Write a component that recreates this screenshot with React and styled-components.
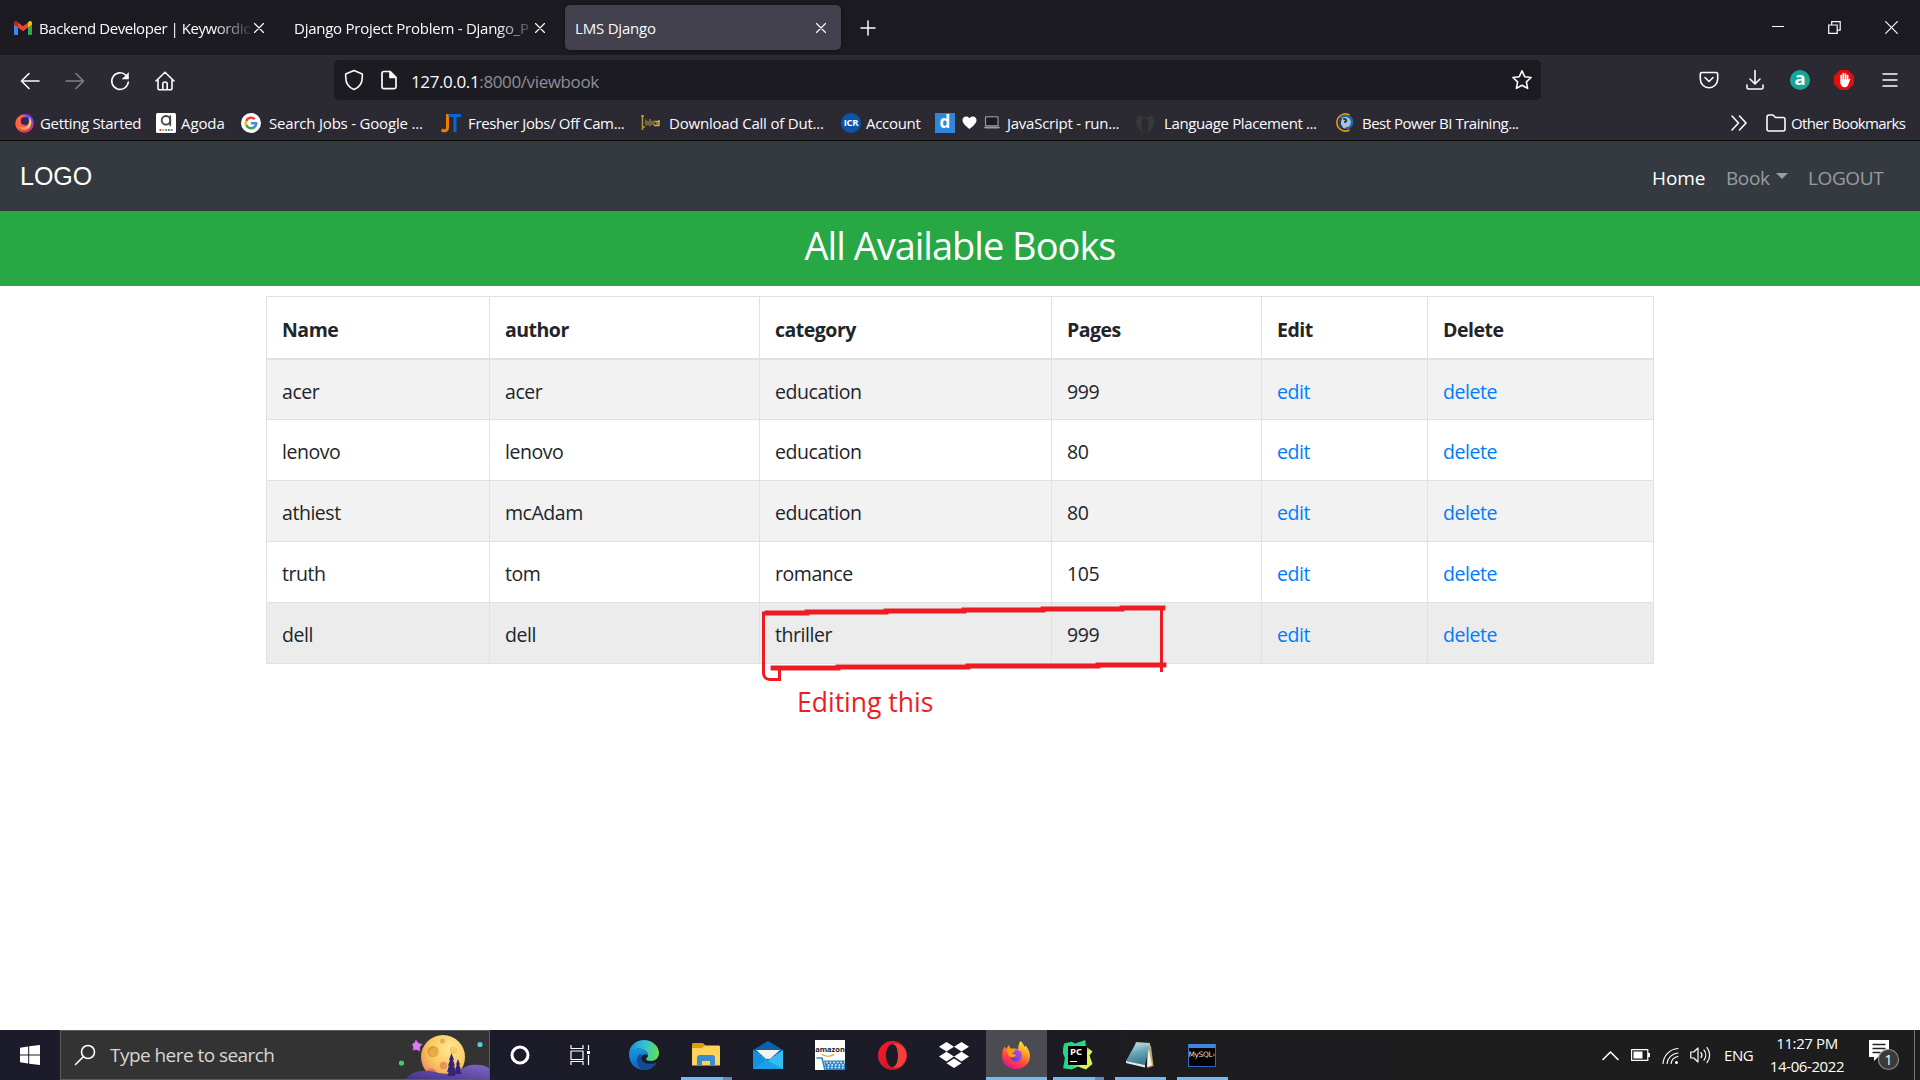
import React from 'react';
import styled, { createGlobalStyle, css } from 'styled-components';

const ui = '"Open Sans", "Noto Sans", sans-serif';

const Global = createGlobalStyle`
  * { box-sizing: border-box; }
  html, body { margin: 0; padding: 0; background: #fff; overflow: hidden; }
  body { font-family: ${ui}; font-size: 20px; line-height: 1.5; color: #212529; }
`;

const Screen = styled.div`
  width: 1920px;
  height: 1080px;
  display: flex;
  flex-direction: column;
`;

/* ---------- browser chrome ---------- */
const TabStrip = styled.div`
  height: 55px;
  flex: none;
  display: flex;
  align-items: center;
  background: #1c1b22;
  color: #fbfbfe;
`;
const Tab = styled.div`
  width: ${(p) => p.$width}px;
  height: 45px;
  flex: none;
  display: flex;
  align-items: center;
  padding: 0 ${(p) => p.$right}px 0 ${(p) => p.$left}px;
  border-radius: 5px;
  ${(p) => p.$active && css`
    background: #42414d;
    box-shadow: 0 0 4px rgba(0, 0, 0, 0.5);
  `}
`;
const TabTitle = styled.span`
  flex: 1;
  min-width: 0;
  white-space: nowrap;
  font-size: 15px;
  padding-top: 2px;
  letter-spacing: ${(p) => p.$track || 0}px;
  margin-left: ${(p) => (p.$icon ? 7 : 0)}px;
  ${(p) => p.$fade && css`
    mask-image: linear-gradient(to right, #000 calc(100% - 36px), rgba(0, 0, 0, 0.1));
  `}
`;
const Glyph = styled.svg`
  width: ${(p) => p.$s || 20}px;
  height: ${(p) => p.$h || p.$s || 20}px;
  flex: none;
  display: block;
  fill: none;
  stroke: currentColor;
  stroke-width: ${(p) => p.$w || 1.6};
  stroke-linecap: round;
  stroke-linejoin: round;
  margin-left: ${(p) => p.$ml || 0}px;
`;
const WindowControls = styled.div`
  margin-left: auto;
  display: flex;
  align-items: center;
  gap: 44px;
  padding-right: 22px;
`;
const Toolbar = styled.div`
  height: 50px;
  flex: none;
  display: flex;
  align-items: center;
  background: #2b2a33;
  color: #fbfbfe;
  padding: 0 19px;
`;
const NavButtons = styled.div`
  width: 315px;
  display: flex;
  gap: 23px;
  padding-top: 2px;
`;
const Faded = styled.span`
  display: block;
  opacity: 0.4;
`;
const UrlBar = styled.div`
  width: 1207px;
  height: 40px;
  display: flex;
  align-items: center;
  background: #1c1b22;
  border-radius: 5px;
  padding: 0 8px 0 9px;
`;
const Url = styled.span`
  flex: 1;
  margin-left: 12px;
  font-size: 17px;
  letter-spacing: -0.38px;
  padding-top: 3px;
  color: #8f8f98;
  b { font-weight: 400; color: #fbfbfe; }
`;
const ToolButtons = styled.div`
  margin-left: auto;
  display: flex;
  align-items: center;
  gap: 24px;
`;
const Bookmarks = styled.div`
  height: 36px;
  flex: none;
  display: flex;
  align-items: center;
  background: #2b2a33;
  border-bottom: 1px solid #0c0c0d;
  color: #fbfbfe;
  padding: 0 15px;
`;
const Bookmark = styled.div`
  width: ${(p) => p.$width}px;
  flex: none;
  display: flex;
  align-items: center;
  gap: ${(p) => p.$gap}px;
  white-space: nowrap;
  font-size: 15px;
  line-height: 20px;
  letter-spacing: ${(p) => p.$track}px;
`;
const BookmarkEnd = styled.div`
  margin-left: auto;
  display: flex;
  align-items: center;
`;
const BookmarkLabel = styled.span`
  margin-left: 5px;
`;

/* ---------- site ---------- */
const Navbar = styled.nav`
  height: 70px;
  flex: none;
  display: flex;
  align-items: center;
  justify-content: space-between;
  background: #343a40;
  padding: 0 35px 0 20px;
`;
const Brand = styled.span`
  font: 25px/38px "Liberation Sans", Arial, sans-serif;
  color: #fff;
`;
const NavLinks = styled.div`
  display: flex;
  padding-top: 4px;
`;
const NavLink = styled.span`
  width: ${(p) => p.$width}px;
  display: flex;
  align-items: center;
  font-size: 19px;
  letter-spacing: ${(p) => p.$track || 0}px;
  color: ${(p) => (p.$active ? '#fff' : 'rgba(255,255,255,.5)')};
`;
const Caret = styled.i`
  margin: -4px 0 0 6px;
  border: 6px solid transparent;
  border-top-color: currentColor;
  border-bottom: 0;
`;
const Banner = styled.h1`
  height: 75px;
  flex: none;
  margin: 0;
  padding-top: 10px;
  background: #28a745;
  color: #fff;
  text-align: center;
  font-size: 38px;
  font-weight: 400;
  line-height: 48px;
  letter-spacing: -1px;
`;
const Content = styled.main`
  flex: 1;
  position: relative;
  padding: 10px 0 0 266px;
`;
const Table = styled.table`
  width: 1388px;
  table-layout: fixed;
  border-collapse: collapse;
  font-size: 19.500px;
`;
const Col = styled.col`
  width: ${(p) => p.$width}px;
`;
const Cell = styled.td`
  height: 61px;
  padding: 4px 15px 0;
  border: 1px solid #dee2e6;
  text-align: left;
  vertical-align: middle;
  letter-spacing: -0.45px;
  color: ${(p) => (p.$link ? '#007bff' : '#212529')};
`;
const HeadCell = styled(Cell)`
  height: 62px;
  font-weight: 700;
  border-bottom-width: 2px;
  letter-spacing: -0.5px;
`;
const Row = styled.tr`
  background: ${(p) => p.$bg};
`;
const Marker = styled.svg`
  position: absolute;
  left: 756px;
  top: 315px;
  width: 420px;
  height: 90px;
  fill: none;
  stroke: #ed1c24;
`;
const Note = styled.span`
  position: absolute;
  left: 797px;
  top: 396px;
  font-size: 26.500px;
  line-height: 40px;
  color: #ed1c24;
`;

/* ---------- taskbar ---------- */
const Taskbar = styled.div`
  height: 50px;
  flex: none;
  display: flex;
  align-items: stretch;
  background: linear-gradient(to right, #1b1b29 0, #1c1b28 50%, #1d1d1f 62%, #1d1d1d 100%);
  color: #fff;
`;
const Slot = styled.div`
  width: ${(p) => p.$width}px;
  flex: none;
  display: flex;
  align-items: center;
  justify-content: center;
  background: ${(p) => (p.$focus ? '#4b4c52' : 'transparent')};
  border-bottom: 3px solid transparent;
  border-top: 3px solid transparent;
  padding-right: ${(p) => p.$nudge || 0}px;
`;
const RunningSlot = styled(Slot)`
  border-image: linear-gradient(to right, #76b9ed ${(p) => p.$split || 100}%, #5b8db8 ${(p) => p.$split || 100}%) 3;
  border-top: 0;
  padding-top: 3px;
  padding-right: 2px;
  margin: 0 ${(p) => p.$gap || 0}px;
`;
const SearchBox = styled.div`
  width: 430px;
  flex: none;
  display: flex;
  align-items: center;
  background: #333;
  border: 1px solid #5c5c5c;
  padding-left: 13px;
`;
const SearchText = styled.span`
  flex: 1;
  margin-left: 14px;
  font-size: 19px;
  letter-spacing: -0.55px;
  color: #d6d6d6;
`;
const Tray = styled.div`
  margin-left: auto;
  display: flex;
  align-items: center;
  font-size: 15px;
  line-height: 23px;
`;
const Lang = styled.span`
  width: 45px;
  letter-spacing: -0.4px;
  margin-left: 12px;
`;
const Clock = styled.div`
  width: 76px;
  text-align: center;
  white-space: nowrap;
  letter-spacing: -0.4px;
`;
const DesktopEdge = styled.div`
  width: 6px;
  height: 50px;
  border-left: 1px solid #777;
  margin-left: 14px;
`;

/* ---------- icons ---------- */
const Close = ({ s = 10, w = 1.2, ml }) => (
  <Glyph $s={s} $w={w} $ml={ml} viewBox="0 0 10 10"><path d="M.5.5l9 9M9.5.5l-9 9" /></Glyph>
);
const Gmail = () => (
  <Glyph $s={18} $h={14} viewBox="0 0 18 14" stroke="none">
    <g stroke="none">
      <path fill="#4285f4" d="M0 3v9.700C0 13.500.6 14 1.300 14H4V5.500z" />
      <path fill="#34a853" d="M14 14h2.700c.7 0 1.300-.5 1.300-1.300V3l-4 2.500z" />
      <path fill="#fbbc04" d="M14 1.500v5L18 3.500V2c0-2-2-2.600-3.300-1.500z" />
      <path fill="#ea4335" d="M4 6.500v-5l5 3.700 5-3.700v5l-5 3.800z" />
      <path fill="#c5221f" d="M0 2v1.500l4 3v-5L3.300.5C2-.6 0 0 0 2z" />
    </g>
  </Glyph>
);
const FirefoxLogo = ({ s = 28 }) => (
  <Glyph $s={s} viewBox="0 0 28 28">
    <defs>
      <linearGradient id="fx" x1=".8" y1="0" x2=".3" y2="1">
        <stop offset="0" stopColor="#fff044" /><stop offset=".35" stopColor="#ffa01e" />
        <stop offset=".65" stopColor="#ff4a3d" /><stop offset="1" stopColor="#e3128a" />
      </linearGradient>
      <linearGradient id="fxg" x1="1" y1="0" x2="0" y2="1">
        <stop offset="0" stopColor="#c255f0" /><stop offset="1" stopColor="#4a3ac5" />
      </linearGradient>
    </defs>
    <g stroke="none">
      <path fill="url(#fx)" d="M18.500 0c2.500 2 3.500 4.500 4 6l1-1.500C26 7 28 11 28 15c0 7.500-6 13-14 13S0 22.500 0 15c0-4 1-7 2.500-9.500L4 8l3-4 1.500 4C12 7 15 8 16 8.500 16.500 5 16.500 3 18.500 0z" />
      <circle cx="14" cy="14.500" r="6" fill="url(#fxg)" />
      <path fill="#ff9a20" d="M5 8c3-1.500 6 0 8 1.500 1 1-2 1.500-3 3 1.500 1 3 1.500 4.500 1-1.500 3-5 3.500-7 2C5.500 14 5 11 5 8z" />
    </g>
  </Glyph>
);
const FirefoxOld = () => (
  <Glyph $s={19} $h={20} viewBox="0 0 19 20">
    <defs>
      <linearGradient id="fo" x1=".1" y1=".1" x2=".7" y2="1">
        <stop offset="0" stopColor="#ff6a2c" /><stop offset=".5" stopColor="#ff5f4a" /><stop offset="1" stopColor="#e8228a" />
      </linearGradient>
      <linearGradient id="fy" x1="1" y1="0" x2=".2" y2="1">
        <stop offset="0" stopColor="#fff04a" /><stop offset="1" stopColor="#ff9a2a" />
      </linearGradient>
    </defs>
    <g stroke="none">
      <ellipse cx="9.500" cy="10.500" rx="9.200" ry="9.300" fill="url(#fo)" />
      <path d="M7 1.500C14-1 20 5 18 11 16 16 12 15 10 13 16 10 13 3 7 1.500z" fill="#7542e5" />
      <path d="M14 4c3 3 3 7 1 10-3 4-9 4-11-.5 4 2 9 .5 10-3.500.5-2 .3-4 0-6z" fill="url(#fy)" />
      <circle cx="9.800" cy="8" r="4" fill="#33285e" />
    </g>
  </Glyph>
);
const Agoda = () => (
  <Glyph $s={20} viewBox="0 0 20 20">
    <g stroke="none">
      <rect width="20" height="20" rx="1.500" fill="#fff" />
      {['#e12d2d', '#ff9b00', '#37a637', '#8b3aa8', '#2a7de1'].map((c, i) => (
        <circle key={c} cx={4.400 + i * 2.800} cy="17" r="1.100" fill={c} />
      ))}
    </g>
    <circle cx="10" cy="7.300" r="4.300" stroke="#444" strokeWidth="1.800" /><path d="M14.300 3v9.500" stroke="#444" strokeWidth="1.600" />
  </Glyph>
);
const Google = () => (
  <Glyph $s={20} viewBox="0 0 20 20">
    <circle cx="10" cy="10" r="10" fill="#fff" stroke="none" />
    <g strokeWidth="2.500" strokeLinecap="butt">
      <path stroke="#ea4335" d="M13.800 6.200A5.300 5.300 0 0 0 5.200 8" />
      <path stroke="#fbbc05" d="M5.200 7.800a5.300 5.300 0 0 0 0 4.400" />
      <path stroke="#34a853" d="M5.200 12a5.300 5.300 0 0 0 8.300 2" />
      <path stroke="#4285f4" d="M10 10.200h5.300a5.300 5.300 0 0 1-2 4" />
    </g>
  </Glyph>
);
const JT = () => (
  <Glyph $s={20} viewBox="0 0 20 20">
    <g strokeLinecap="butt" strokeWidth="3">
      <path stroke="#f07c00" d="M6.500 1v13c0 4-2.500 4.500-6 3" />
      <path stroke="#0a66d6" d="M7.500 2.500H20M14 2v17" />
    </g>
  </Glyph>
);
const Crack = () => (
  <Glyph $s={19} $h={18} viewBox="0 0 19 18">
    <g strokeWidth="1.500" strokeLinecap="butt">
      <path stroke="#b49a2c" d="M1.500 1v15M0 2h3M1 13h3" />
      <path stroke="#8d7a40" d="M5 5.500v6M7 7v4.500M9 5v7M11 7v4M13 6.500v5M16 7v4" />
      <path stroke="#d0b040" d="M13 11.500h5M14 7.500h4M18 6v6" />
    </g>
  </Glyph>
);
const IconText = styled.span`
  width: ${(p) => p.$s}px;
  height: ${(p) => p.$s}px;
  flex: none;
  display: flex;
  align-items: center;
  justify-content: center;
  border-radius: ${(p) => p.$round || 0};
  background: ${(p) => p.$bg};
  color: #fff;
  font: 700 ${(p) => p.$font}px/1 ${ui};
  letter-spacing: ${(p) => p.$tight || 0}px;
  padding-bottom: ${(p) => p.$lift || 0}px;
`;
const Heart = () => (
  <Glyph $s={15} viewBox="0 0 15 15"><path stroke="none" fill="#fff" d="M7.500 14C3 10.500.5 8 .5 5 .5 1 5.500.2 7.500 3.200 9.500.2 14.500 1 14.500 5c0 3-2.500 5.500-7 9z" /></Glyph>
);
const Laptop = () => (
  <Glyph $s={16} $h={13} viewBox="0 0 16 13" $w={1}><path fill="#1c1b1f" stroke="#aaa" d="M2 .8h12v9H2z" /><path stroke="#999" strokeWidth="2" d="M1.200 11.500h13.600" /></Glyph>
);
const DarkMark = () => (
  <Glyph $s={20} viewBox="0 0 20 20"><path stroke="none" fill="#383838" d="M5 1C1 4 0 10 3 15c2 3 4 4 5 5C6 14 6 8 8 5h4c2 3 2 9 0 15 5-3 8-8 7-13-.5-3-2-5-4-6 1 2 0 3-2 3H8C6 4 5 3 5 1z" /></Glyph>
);
const PowerBI = () => (
  <Glyph $s={19} viewBox="0 0 19 19">
    <circle cx="10" cy="9.500" r="6" fill="#a9c6d4" stroke="none" />
    <path d="M14 1.800A8.500 8.500 0 1 0 14 17.200" stroke="#e8951c" strokeWidth="1.600" />
    <path d="M6 4.500c6-4 12 0 11 6-.8 3-3 4.500-5.500 4.500" stroke="#1b6fb4" strokeWidth="2.200" />
    <path d="M6 6c-2 3-1 7 1 8.500M9 6c3 0 3 2 1 3" stroke="#223e55" strokeWidth="2" />
  </Glyph>
);
const Hand = () => (
  <Glyph $s={20} viewBox="0 0 20 20">
    <path stroke="none" fill="#e40d0d" d="M6 0h8l6 6v8l-6 6H6l-6-6V6z" />
    <g stroke="#fff" strokeWidth="1.700"><path d="M7.200 5.500V11M9.300 3.700v7M11.500 4V11M13.600 5.700v6" /></g>
    <path stroke="none" fill="#fff" d="M6.400 9.500h8.100l1-.8c.6-.2 1 .2.8.8L14.800 13c-.5 2.500-1.500 4.200-4.200 4.200-2.500 0-3.500-1.200-4.200-4z" />
  </Glyph>
);
const Moon = () => (
  <Glyph $s={92} $h={48} viewBox="0 0 92 48">
    <defs>
      <radialGradient id="mn" cx=".65" cy=".3" r=".8">
        <stop offset="0" stopColor="#ffe896" /><stop offset=".55" stopColor="#fbc95f" /><stop offset="1" stopColor="#ea8a58" />
      </radialGradient>
      <linearGradient id="hl" x1="0" y1="1" x2="1" y2="0">
        <stop offset="0" stopColor="#45318c" /><stop offset="1" stopColor="#7d68c2" />
      </linearGradient>
    </defs>
    <g stroke="none">
      <circle cx="46" cy="26" r="22" fill="url(#mn)" />
      <circle cx="36" cy="20.500" r="5.500" fill="#d89b3d" /><circle cx="37" cy="21.200" r="4.400" fill="#e6ac48" />
      <circle cx="56.500" cy="19" r="3.500" fill="#f1be5a" /><circle cx="57" cy="18.400" r="2.600" fill="#f8cf70" /><circle cx="45.500" cy="10" r="2.600" fill="#e9b04e" />
      <circle cx="46.500" cy="34.500" r="3.800" fill="#e5945a" /><path d="M28 42c1-5 9-7 12 0z" fill="#d9706b" />
      <path d="M9 48c7-9 20-10 33-6 16 3 20-5 32-8 7-1 14 0 18 3v11z" fill="url(#hl)" />
      <path d="M54.500 22l2.500 7-1 .2 2 5.300-1 .2 2 6-1.500.2 1 4h-8l1-4-1.500-.2 2-6-1-.2 2-5.300-1-.2zM61 28l2 5.500-.9.200 1.800 4.500-1 .2 1.500 4.600h-6.800l1.500-4.600-1-.2 1.800-4.500-.9-.2z" fill="#33247a" />
      <path d="M19 9.500q1.500 3.500 6 3.800-3.500 2.500-2.200 6.700-3-2.500-6.800-1 1.500-3-.5-5.800 2.700-.5 3.500-3.700z" fill="#e278f5" stroke="#e278f5" strokeWidth=".6" />
      <circle cx="4.500" cy="32" r="2.600" fill="#40cf6b" /><circle cx="83" cy="13.500" r="2.600" fill="#5dc9e0" />
    </g>
  </Glyph>
);
const Edge = () => (
  <Glyph $s={30} viewBox="0 0 30 30">
    <defs>
      <linearGradient id="e1" x1="0" y1=".4" x2="1" y2=".5"><stop offset="0" stopColor="#1b8fdc" /><stop offset=".5" stopColor="#35c1d6" /><stop offset="1" stopColor="#66e04e" /></linearGradient>
      <linearGradient id="e2" x1="0" y1="0" x2=".3" y2="1"><stop offset="0" stopColor="#1b9de2" /><stop offset="1" stopColor="#0b5fc0" /></linearGradient>
    </defs>
    <g stroke="none">
      <path fill="url(#e2)" d="M0 14C3 8 12 7 17 11c2 2 2 4 2 4-6-3-8 3-6 7 3 5 9 5 14 1-3 5-7 7-12 7C6 30 0 23 0 14z" />
      <path fill="#124a94" d="M10 15c-4 4-2 12 4 14.900 6 .4 10-2 13.500-7-.3-.5-.6-.4-1-.2-5 2.300-12 1.300-14-3.700-.5-1.500-.5-3 0-5z" />
      <path fill="url(#e1)" d="M0 14C0 6 7 0 15 0s15 6 15 13c0 5-4 8-8 8-3 0-5-1-5-2s2-1 2-4c0-4-5-7-10-6.500C4 9 1 11 0 14z" />
    </g>
  </Glyph>
);
const Folder = () => (
  <Glyph $s={28} $h={24} viewBox="0 0 28 24">
    <g stroke="none">
      <path d="M0 1.500C0 .7.5 0 1.500 0H11l3 3-3 3H0z" fill="#e09b08" />
      <path d="M0 5h10l3-2.500h13.500c1 0 1.500.5 1.500 1.500v18.500H0z" fill="#ffd25c" />
      <path d="M5 23v-8c0-2 1-3 3-3h12c2 0 3 1 3 3v8h-5v-5h-8v5z" fill="#3b8bd0" />
    </g>
  </Glyph>
);
const Mail = () => (
  <Glyph $s={30} $h={28} viewBox="0 0 30 28">
    <g stroke="none">
      <path d="M0 9L15 0l15 9-3 5H3z" fill="#0a61ae" /><path d="M3 9h24l-10 9h-4z" fill="#f3f3f3" />
      <path d="M0 9l15 10L30 9v19H0z" fill="#35bdf2" /><path d="M0 9l26 19H0z" fill="#1590dd" /><path d="M13 18.500L30 28H0z" fill="#1aa0e6" />
    </g>
  </Glyph>
);
const AmazonTile = styled.div`
  width: 30px;
  height: 30px;
  background: #fff;
  color: #222;
  font: 700 7.500px/10px ${ui};
  text-align: center;
  padding-top: 4px;
  overflow: hidden;
`;
const Cart = () => (
  <Glyph $s={30} $h={16} viewBox="0 0 30 16">
    <path d="M7 .5c4 2.500 9 2 12 0" stroke="#f29a2c" strokeWidth="1.300" />
    <path d="M2 4h5l3 12" stroke="#2c86c8" strokeWidth="1.600" />
    <path d="M9 6.500h21V16H11z" fill="#2c86c8" stroke="none" />
    <g stroke="#fff" strokeWidth="1.600" strokeDasharray="1.600 2" strokeLinecap="butt"><path d="M11 8.500h19M12.800 11h18M12.500 13.500h17" /></g>
  </Glyph>
);
const Opera = () => (
  <Glyph $s={29} viewBox="0 0 29 29">
    <defs><linearGradient id="op" x1="0" y1="0" x2="1" y2="1"><stop offset="0" stopColor="#ff1b2d" /><stop offset="1" stopColor="#b51425" /></linearGradient></defs>
    <path stroke="none" fill="url(#op)" fillRule="evenodd" d="M14.500 0A14.500 14.500 0 1 0 14.500 29 14.500 14.500 0 1 0 14.500 0zM14.500 3c3.500 0 5.500 5 5.500 11.500S18 26 14.500 26 8 21 8 14.500 11 3 14.500 3z" />
    <path stroke="none" fill="#f2413f" d="M14.500 3C18 3 20 8 20 14.500S18 26 14.500 26c4 2 8 0 9.500-2 6-5 6-14 0-19-3-3-6-3-9.500-2z" />
  </Glyph>
);
const Dropbox = () => (
  <Glyph $s={30} $h={26} viewBox="0 0 30 26"><path stroke="none" fill="#fff" d="M7.500 0L15 4.800 7.500 9.600 0 4.800zM22.500 0L30 4.800l-7.500 4.800L15 4.800zM7.500 9.800l7.500 4.800-7.500 4.800L0 14.600zM22.500 9.800l7.500 4.800-7.500 4.800-7.500-4.800zM15 16.400l7.500 4.800L15 26l-7.500-4.800z" /></Glyph>
);
const PyCharm = styled.div`
  width: 30px;
  height: 30px;
  display: grid;
  place-items: center;
  clip-path: polygon(5% 12%, 30% 6%, 42% 12%, 76% 0, 78% 22%, 100% 38%, 90% 52%, 100% 80%, 78% 98%, 52% 88%, 30% 98%, 2% 94%, 8% 60%, 0 40%);
  background: linear-gradient(120deg, #21d789 0 35%, #2fe07f 55%, #e9f25b 70%, #b8f04e 100%);
`;
const PyBox = styled.div`
  width: 19px;
  height: 19px;
  background: #000;
  color: #fff;
  font: 700 9.500px/11px ${ui};
  padding-left: 2px;
  &::after { content: ''; display: block; width: 7px; height: 1.500px; background: #fff; margin-top: 4px; }
`;
const Notepad = () => (
  <Glyph $s={28} viewBox="0 0 28 28">
    <defs><linearGradient id="np" x1="0" y1="0" x2=".3" y2="1"><stop offset="0" stopColor="#d5eef2" /><stop offset=".5" stopColor="#6aa8b8" /><stop offset="1" stopColor="#3b7c90" /></linearGradient></defs>
    <g stroke="none">
      <path d="M22 3l3 2 2.500 20-6 2z" fill="#c9a36a" /><path d="M22 4l4 20-5 2z" fill="#f4f0e4" />
      <path d="M10 2l14 1-5 21-19-4z" fill="url(#np)" /><path d="M0 20l19 4v2.500L0 22z" fill="#e8eef0" /><path d="M10 1l14 1v2.500L9.500 3z" fill="#b9c4c6" />
    </g>
  </Glyph>
);
const MySql = styled.div`
  width: 28px;
  height: 23px;
  border: 1px solid #2d6bc4;
  border-top: 4px solid #3f86dd;
  background: #000;
  color: #ddd;
  font: 7.500px/11px "DejaVu Sans", sans-serif;
  letter-spacing: -0.4px;
  padding-top: 1px;
  overflow: hidden;
`;
const Bell = () => (
  <Glyph $s={32} $h={32} $ml={23} viewBox="0 0 32 32">
    <path stroke="none" fill="#fff" d="M1 1h20v17H10l-4 4v-4H1z" />
    <path stroke="#222" strokeWidth="1.300" d="M5 5.500h12M5 9.500h12M5 13.500h7" />
    <circle cx="20.500" cy="20.500" r="10" fill="#3a3a3a" stroke="#888" strokeWidth="1.200" />
    <text x="20.500" y="25.500" textAnchor="middle" fontSize="14" fill="#fff" stroke="none" fontFamily="Open Sans">1</text>
  </Glyph>
);

const columns = [223, 270, 292, 210, 166, 226];
const heads = ['Name', 'author', 'category', 'Pages', 'Edit', 'Delete'];
const books = [
  ['acer', 'acer', 'education', '999'],
  ['lenovo', 'lenovo', 'education', '80'],
  ['athiest', 'mcAdam', 'education', '80'],
  ['truth', 'tom', 'romance', '105'],
  ['dell', 'dell', 'thriller', '999'],
];
const rowColor = (i) => (i === 4 ? '#ececec' : i % 2 ? '#fff' : '#f2f2f2');

export default function App() {
  return (
    <Screen>
      <Global />
      <TabStrip>
        <Tab $width={279} $left={14} $right={15}>
          <Gmail /><TabTitle $icon $fade $track={-0.44}>Backend Developer | Keywordio</TabTitle><Close ml={4} />
        </Tab>
        <Tab $width={286} $left={15} $right={20}>
          <TabTitle $fade $track={-0.25}>Django Project Problem - Django_P</TabTitle><Close ml={2} />
        </Tab>
        <Tab $width={276} $left={10} $right={15} $active>
          <TabTitle $track={-0.2}>LMS Django</TabTitle><Close />
        </Tab>
        <Glyph $s={16} $ml={19} $w={1.500} viewBox="0 0 16 16"><path d="M8 1v14M1 8h14" /></Glyph>
        <WindowControls>
          <Glyph $s={12} $w={1} viewBox="0 0 12 12"><path d="M0 4.500h12" /></Glyph>
          <Glyph $s={13} $w={1.200} viewBox="0 0 13 13"><path d="M.7 4h8.500v8.400H.7zM3.700 4V.7h8.500v8.500h-3" strokeLinejoin="miter" /></Glyph>
          <Close s={13} w={0.9} />
        </WindowControls>
      </TabStrip>
      <Toolbar>
        <NavButtons>
          <Glyph $s={22} viewBox="0 0 22 22"><path d="M20 11H2.500M10 3.500L2.500 11l7.500 7.500" /></Glyph>
          <Faded><Glyph $s={22} viewBox="0 0 22 22"><path d="M2 11h17.500M12 3.500l7.500 7.500-7.500 7.500" /></Glyph></Faded>
          <Glyph $s={22} viewBox="0 0 22 22"><path d="M19.300 12A8.300 8.300 0 1 1 17 5.300" /><path d="M19.500 3v6h-6z" fill="currentColor" strokeWidth=".6" /></Glyph>
          <Glyph $s={22} viewBox="0 0 22 22"><path d="M2 11l9-8.800L20 11M4 9.500V18c0 1.200.6 1.800 1.800 1.800h10.400c1.200 0 1.800-.6 1.800-1.800V9.500M8.800 19.500V14c0-1.200.7-2 2.200-2s2.200.8 2.200 2v5.500" /></Glyph>
        </NavButtons>
        <UrlBar>
          <Glyph $s={22} viewBox="0 0 22 22"><path d="M11 1.500l8.300 3.400v3C19.300 14 16 18.500 11 20.500 6 18.500 2.700 14 2.700 7.900v-3z" /></Glyph>
          <Glyph $s={20} $ml={14} viewBox="0 0 20 20" $w={1.700}><path d="M5 1.500h6l6 6V17c0 1-.6 1.600-1.600 1.600H4.600C3.600 18.600 3 18 3 17V3.500c0-1.300.7-2 2-2z" /><path d="M11 1.500v6h6z" fill="currentColor" /></Glyph>
          <Url><b>127.0.0.1</b>:8000/viewbook</Url>
          <Glyph $s={22} viewBox="0 0 22 22"><path d="M11 1.800l2.700 5.900 6.400.8-4.700 4.400 1.200 6.500L11 16.300l-5.600 3.100 1.200-6.500L1.900 8.500l6.400-.8z" /></Glyph>
        </UrlBar>
        <ToolButtons>
          <Glyph $s={22} viewBox="0 0 22 22"><path d="M4 3.500h14c1 0 1.700.6 1.700 1.700V10c0 5-4 8.700-8.700 8.700S2.300 15 2.300 10V5.200c0-1.100.7-1.700 1.700-1.700z" /><path d="M7 8.500l4 4 4-4" /></Glyph>
          <Glyph $s={22} viewBox="0 0 22 22"><path d="M11 1.500v13M6 10l5 5 5-5M3 16v2.500c0 1 .5 1.500 1.500 1.500h13c1 0 1.500-.5 1.500-1.500V16" /></Glyph>
          <IconText $s={20} $bg="#13a699" $round="50%" $font={18.5} $lift={3}>a</IconText>
          <Hand />
          <Glyph $s={22} $h={22} $w={1.400} $ml={1} viewBox="0 0 22 22"><path d="M4 5h14M4 11h14M4 17h14" /></Glyph>
        </ToolButtons>
      </Toolbar>
      <Bookmarks>
        <Bookmark $width={141} $gap={6} $track={-0.33}><FirefoxOld />Getting Started</Bookmark>
        <Bookmark $width={85} $gap={5} $track={-0.1}><Agoda />Agoda</Bookmark>
        <Bookmark $width={200} $gap={8} $track={-0.2}><Google />Search Jobs - Google ...</Bookmark>
        <Bookmark $width={200} $gap={7} $track={-0.36}><JT />Fresher Jobs/ Off Cam...</Bookmark>
        <Bookmark $width={200} $gap={9} $track={-0.2}><Crack />Download Call of Dut...</Bookmark>
        <Bookmark $width={94} $gap={5} $track={-0.3}><IconText $s={20} $bg="#0a55aa" $round="50%" $font={9.500} $tight={-0.3}>ICR</IconText>Account</Bookmark>
        <Bookmark $width={200} $gap={7} $track={-0.25}><IconText $s={20} $bg="#2f86dc" $font={17} $lift={2}>d</IconText><Heart /><Laptop />JavaScript - run...</Bookmark>
        <Bookmark $width={200} $gap={9} $track={-0.37}><DarkMark />Language Placement ...</Bookmark>
        <Bookmark $width={190} $gap={8} $track={-0.5}><PowerBI />Best Power BI Training...</Bookmark>
        <BookmarkEnd>
          <Glyph $s={18} viewBox="0 0 18 18"><path d="M2 2l6.500 7L2 16M9.500 2L16 9l-6.500 7" /></Glyph>
          <Glyph $s={20} $ml={18} viewBox="0 0 20 20"><path d="M1 4.200C1 2.800 1.800 2 3 2h4l2.500 2.500H17c1.300 0 2 .7 2 2V16c0 1.200-.7 2-2 2H3c-1.200 0-2-.8-2-2z" /></Glyph>
          <Bookmark $width={119} $gap={0} $track={-0.62}><BookmarkLabel>Other Bookmarks</BookmarkLabel></Bookmark>
        </BookmarkEnd>
      </Bookmarks>

      <Navbar>
        <Brand>LOGO</Brand>
        <NavLinks>
          <NavLink $width={74} $active $track={-0.1}>Home</NavLink>
          <NavLink $width={82} $track={-0.4}>Book<Caret /></NavLink>
          <NavLink $width={77} $track={-0.4}>LOGOUT</NavLink>
        </NavLinks>
      </Navbar>
      <Banner>All Available Books</Banner>
      <Content>
        <Table>
          <colgroup>{columns.map((w, i) => <Col key={i} $width={w} />)}</colgroup>
          <thead><tr>{heads.map((h) => <HeadCell as="th" key={h}>{h}</HeadCell>)}</tr></thead>
          <tbody>
            {books.map((b, i) => (
              <Row key={i} $bg={rowColor(i)}>
                {b.map((v, j) => <Cell key={j}>{v}</Cell>)}
                <Cell $link>edit</Cell>
                <Cell $link>delete</Cell>
              </Row>
            ))}
          </tbody>
        </Table>
        <Marker viewBox="0 0 420 90">
          <path strokeWidth="4.800" d="M11 12h40M51 11h79M130 10h78M208 9h79M287 8h79M366 7h41M17 67h65M82 66h130M212 65h130M342 64h66" strokeLinecap="square" />
          <path strokeWidth="3" d="M11 12H7.500v60c0 3 2 6.500 6 6.500h10V67M405.500 8v63" />
        </Marker>
        <Note>Editing this</Note>
      </Content>

      <Taskbar>
        <Slot $width={60}><Glyph $s={20} viewBox="0 0 20 20"><path stroke="none" fill="#fff" d="M0 2.800L8.200 1.500v8H0zM9.200 1.300L20 0v9.500H9.200zM0 10.500h8.200v8L0 17.300zM9.200 10.500H20V20L9.200 18.700z" /></Glyph></Slot>
        <SearchBox>
          <Glyph $s={22} viewBox="0 0 22 22"><circle cx="14" cy="8" r="6.500" /><path d="M9.300 12.700L1.500 20.500" /></Glyph>
          <SearchText>Type here to search</SearchText>
          <Moon />
        </SearchBox>
        <Slot $width={60}><Glyph $s={20} $w={3} viewBox="0 0 20 20"><circle cx="10" cy="10" r="8" /></Glyph></Slot>
        <Slot $width={60}>
          <Glyph $s={20} $w={1.200} viewBox="0 0 20 20"><g strokeLinecap="butt"><path d="M1 0v3.500h12V0M1 6h12v8.500H1zM1 20v-3.500h12V20M18.500 0v5M18.500 10v10" /></g><path d="M17 6h3v3h-3z" fill="#fff" stroke="none" /></Glyph>
        </Slot>
        <Slot $width={68}><Edge /></Slot>
        <RunningSlot $width={51} $gap={3} $split={79}><Folder /></RunningSlot>
        <Slot $width={67} $nudge={2}><Mail /></Slot>
        <Slot $width={58} $nudge={2}><AmazonTile>amazon<Cart /></AmazonTile></Slot>
        <Slot $width={65} $nudge={1}><Opera /></Slot>
        <Slot $width={59} $nudge={2}><Dropbox /></Slot>
        <Slot $width={2} />
        <RunningSlot $width={61} $focus><FirefoxLogo /></RunningSlot>
        <RunningSlot $width={51} $gap={6} $split={79}><PyCharm><PyBox>PC</PyBox></PyCharm></RunningSlot>
        <RunningSlot $width={51} $gap={5}><Notepad /></RunningSlot>
        <RunningSlot $width={51} $gap={6}><MySql>MySQL›</MySql></RunningSlot>
        <Tray>
          <Glyph $s={17} viewBox="0 0 17 17"><path d="M1 12.500l7.500-7.500 7.500 7.500" /></Glyph>
          <Glyph $s={19} $h={12} $ml={12} $w={1.200} viewBox="0 0 19 12"><path d="M.6.6h16.200v10.800H.6z" /><path d="M2.500 2.500h9v7h-9zM17 4h2v4h-2z" fill="#fff" stroke="none" /></Glyph>
          <Glyph $s={17} $ml={12} $w={1.100} viewBox="0 0 17 17"><path d="M1 17A16 16 0 0 1 16 1.500M5 17A12 12 0 0 1 16 6M9 17a8 8 0 0 1 7-7.500" /><circle cx="14.500" cy="15.500" r="1.500" fill="#fff" stroke="none" /></Glyph>
          <Glyph $s={22} $h={18} $ml={11} $w={1.200} viewBox="0 0 22 18"><path d="M.8 6h3L8 2v14l-4.200-4h-3zM11 6.500a4 4 0 0 1 0 5M14 4a8 8 0 0 1 0 10M17 1.500a12 12 0 0 1 0 15" /></Glyph>
          <Lang>ENG</Lang>
          <Clock>11:27 PM<br />14-06-2022</Clock>
          <Bell />
          <DesktopEdge />
        </Tray>
      </Taskbar>
    </Screen>
  );
}
